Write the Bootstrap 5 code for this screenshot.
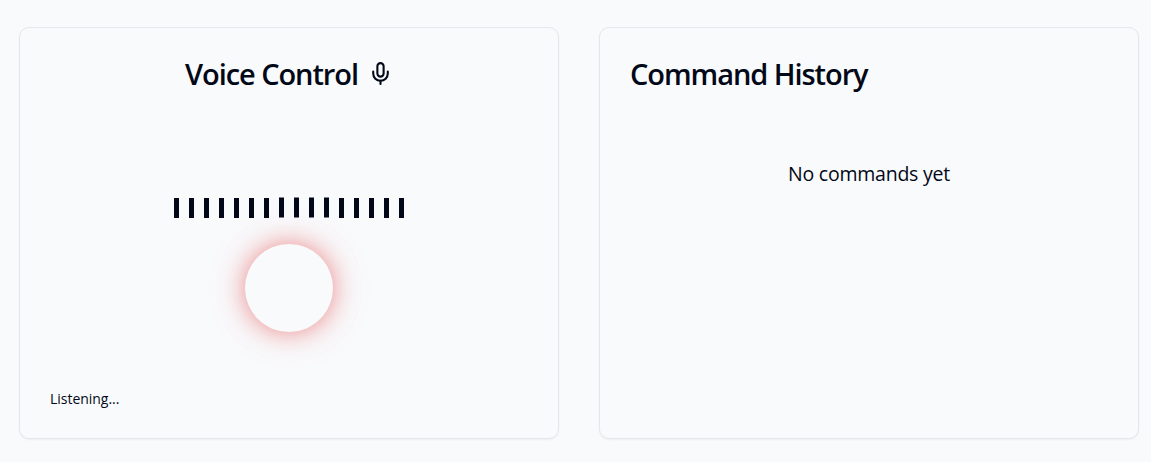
<!DOCTYPE html>
<html lang="en">
<head>
<meta charset="utf-8">
<meta name="viewport" content="width=device-width, initial-scale=1">
<title>Voice Control</title>
<link href="https://cdn.jsdelivr.net/npm/bootstrap@5.3.0/dist/css/bootstrap.min.css" rel="stylesheet">
<style>
  body { background: #f9fafc; color: #020817; font-family: "Open Sans", "Noto Sans", sans-serif; }
  .panels { padding: 27px 12px 23px 19px; gap: 40px; }
  .panel { height: 412px; background: #f9fafc; border: 1px solid #e5e7eb; border-radius: 10px; box-shadow: 0 1px 2px rgba(0,0,0,.05); color: #020817; padding: 29px 30px 30px; }
  .panel-title { font-size: 29px; line-height: 34px; font-weight: 570; letter-spacing: -1.06px; white-space: nowrap; }
  .mic { width: 25px; height: 25px; margin-left: 10px; margin-top: -1px; }
  .wave { gap: 10px; margin-top: 107px; height: 20px; margin-left: -1px; }
  .wave-bar { width: 5px; height: 20px; background: #020817; }
  .wave-bar.active { transform: translateY(-.4px) rotate(.001deg); }
  .orb { width: 88px; height: 88px; margin-top: 26px; border-radius: 50%; background: #f9fafc; box-shadow: 0 0 25px rgba(230,65,65,.55), 0 0 45px rgba(220,80,80,.13); }
  .status { font-size: 14px; line-height: 20px; letter-spacing: -.03px; margin-bottom: -1px; }
  .empty { font-size: 19.5px; line-height: 30px; letter-spacing: -.24px; margin-top: 68px; }
</style>
</head>
<body>
<main class="panels d-flex">
  <section class="panel card flex-fill w-50">
    <h1 class="panel-title d-flex align-items-center justify-content-center m-0">
      <span>Voice Control</span>
      <svg class="mic" viewBox="0 0 24 24" fill="none" stroke="currentColor" stroke-width="2" stroke-linecap="round" stroke-linejoin="round" aria-hidden="true"><path d="M12 2a3 3 0 0 0-3 3v7a3 3 0 0 0 6 0V5a3 3 0 0 0-3-3Z"/><path d="M19 10v2a7 7 0 0 1-14 0v-2"/><path d="M12 19v3"/></svg>
    </h1>
    <div class="wave d-flex justify-content-center">
      <i class="wave-bar"></i><i class="wave-bar"></i><i class="wave-bar"></i><i class="wave-bar"></i>
      <i class="wave-bar"></i><i class="wave-bar"></i><i class="wave-bar"></i><i class="wave-bar active"></i>
      <i class="wave-bar active"></i><i class="wave-bar active"></i><i class="wave-bar active"></i><i class="wave-bar"></i>
      <i class="wave-bar"></i><i class="wave-bar"></i><i class="wave-bar"></i><i class="wave-bar"></i>
    </div>
    <div class="orb mx-auto"></div>
    <p class="status mt-auto">Listening...</p>
  </section>
  <section class="panel card flex-fill w-50">
    <h2 class="panel-title m-0">Command History</h2>
    <p class="empty text-center mb-0">No commands yet</p>
  </section>
</main>
<script src="https://cdn.jsdelivr.net/npm/bootstrap@5.3.0/dist/js/bootstrap.bundle.min.js"></script>
</body>
</html>
